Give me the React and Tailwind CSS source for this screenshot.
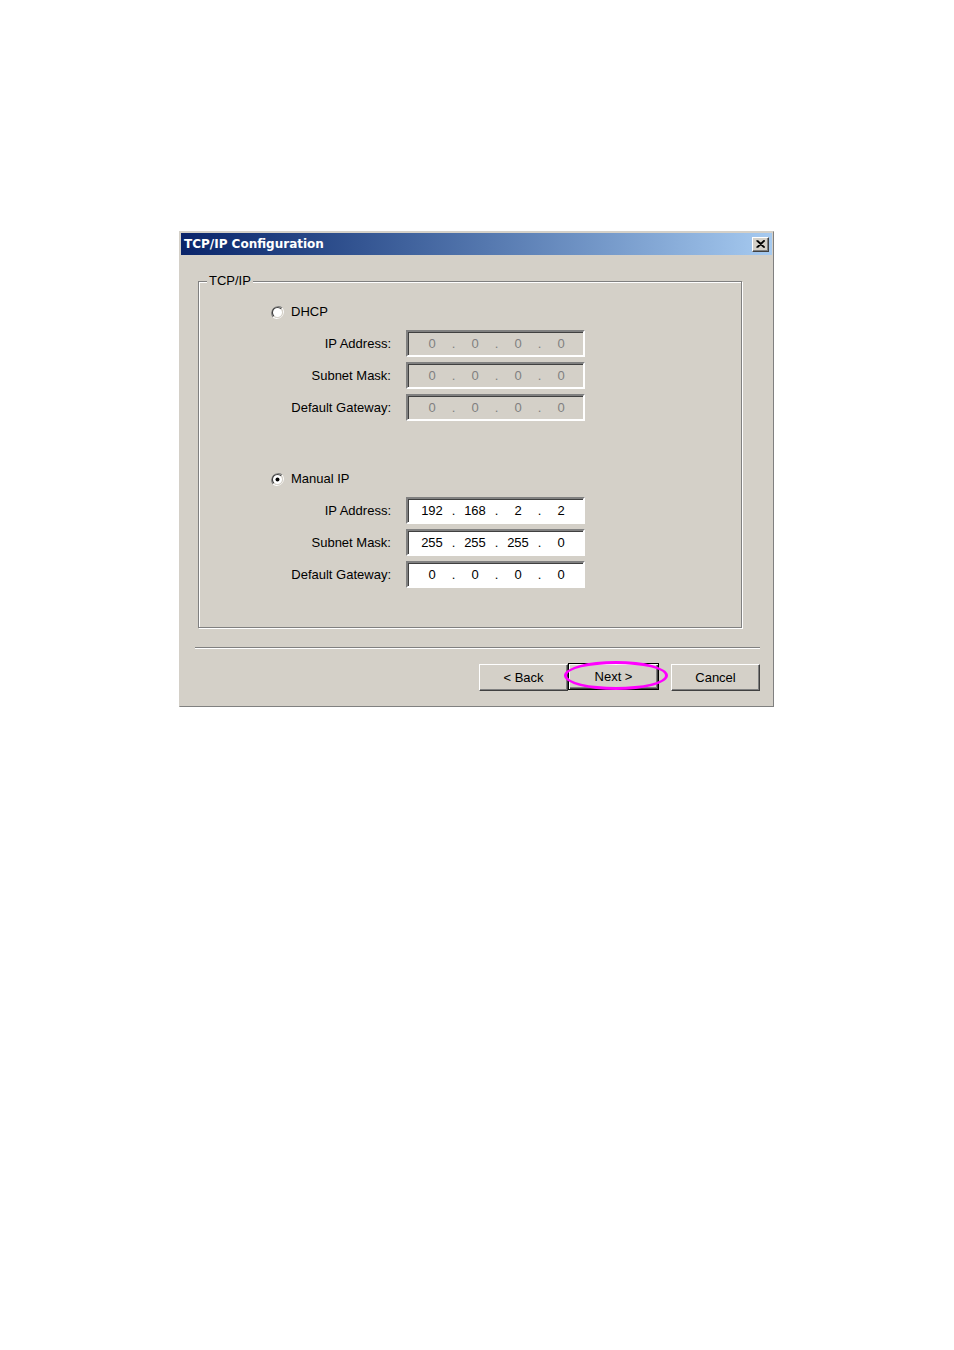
function Radio({ checked }) {
  return (
    <svg width="13" height="13" viewBox="0 0 12 12" className="shrink-0">
      <path d="M10.2 1.8 A6 6 0 0 0 1.8 10.2" fill="none" stroke="#808080" strokeWidth="1" />
      <path d="M1.8 10.2 A6 6 0 0 0 10.2 1.8" fill="none" stroke="#ffffff" strokeWidth="1" />
      <circle cx="6" cy="6" r="4.6" fill="#ffffff" />
      <path d="M9.3 2.7 A4.6 4.6 0 0 0 2.7 9.3" fill="none" stroke="#404040" strokeWidth="1" />
      <path d="M2.7 9.3 A4.6 4.6 0 0 0 9.3 2.7" fill="none" stroke="#d4d0c8" strokeWidth="1" />
      {checked && <circle cx="6" cy="6" r="1.8" fill="#000000" />}
    </svg>
  );
}

function IpField({ parts, enabled }) {
  return (
    <div
      className={
        "flex items-center h-[27px] w-[179px] pl-[6px] border-2 border-t-[#808080] border-l-[#808080] border-b-white border-r-white shadow-[inset_1px_1px_0_#404040] " +
        (enabled ? "bg-white text-black" : "bg-[#d4d0c8] text-[#808080]")
      }
    >
      {parts.map((p, i) => (
        <div key={i} className="flex">
          <span className="w-[36px] text-center">{p}</span>
          {i < 3 && <span className="w-[7px] text-center">.</span>}
        </div>
      ))}
    </div>
  );
}

function Row({ label, parts, enabled, first }) {
  return (
    <div className={"flex items-center " + (first ? "mt-[10px]" : "mt-[5px]")}>
      <div className="w-[192px] text-right">{label}</div>
      <div className="ml-[15px]">
        <IpField parts={parts} enabled={enabled} />
      </div>
    </div>
  );
}

function Btn({ children, isDefault }) {
  return (
    <button
      className={
        "h-[27px] text-[13px] text-black bg-[#d4d0c8] " +
        (isDefault
          ? "w-[91px] border border-black shadow-[inset_1px_1px_0_#fff,inset_-1px_-1px_0_#404040,inset_-2px_-2px_0_#808080]"
          : "w-[89px] border border-t-white border-l-white border-r-[#404040] border-b-[#404040] shadow-[inset_-1px_-1px_0_#808080]")
      }
    >
      {children}
    </button>
  );
}

export default function App() {
  const zero = ["0", "0", "0", "0"];
  return (
    <div className="min-h-[1350px] bg-white pt-[231px] font-['Liberation_Sans',Arial,sans-serif] text-[13px] text-black">
      <div className="ml-[179px] w-[595px] bg-[#d4d0c8] border border-[#d4d0c8] border-r-[#808080] border-b-[#808080] p-px">
        <div className="flex h-[22px] items-center justify-between pl-[3px] pr-[3px] bg-gradient-to-r from-[#0a246a] to-[#a6caf0]">
          <span className="font-bold text-white text-[12px] font-['DejaVu_Sans',sans-serif]">TCP/IP Configuration</span>
          <div className="flex items-center justify-center w-[17px] h-[15px] bg-[#d4d0c8] border border-t-white border-l-white border-r-[#404040] border-b-[#404040] shadow-[inset_-1px_-1px_0_#808080]">
            <svg width="9" height="8" viewBox="0 0 9 8">
              <path d="M0.5 0.5 L8 7.5 M1.5 0.5 L9 7.5 M8 0.5 L0.5 7.5 M9 0.5 L1.5 7.5" stroke="#000" strokeWidth="1.1" />
            </svg>
          </div>
        </div>

        <div className="pl-[17px] pb-[14px]">
          <fieldset className="mt-[18px] w-[544px] border border-[#808080] shadow-[1px_1px_0_#fff,inset_1px_1px_0_#fff] pt-[15px] pb-[39px]">
            <legend className="ml-[8px] px-[2px] bg-[#d4d0c8] leading-[16px]">TCP/IP</legend>

            <div className="flex items-center h-[16px] pl-[72px] gap-[7px]">
              <Radio checked={false} />
              <span>DHCP</span>
            </div>
            <Row label="IP Address:" parts={zero} first />
            <Row label="Subnet Mask:" parts={zero} />
            <Row label="Default Gateway:" parts={zero} />

            <div className="flex items-center h-[16px] mt-[50px] pl-[72px] gap-[7px]">
              <Radio checked />
              <span>Manual IP</span>
            </div>
            <Row label="IP Address:" parts={["192", "168", "2", "2"]} enabled first />
            <Row label="Subnet Mask:" parts={["255", "255", "255", "0"]} enabled />
            <Row label="Default Gateway:" parts={zero} enabled />
          </fieldset>

          <div className="mt-[19px] w-[565px] -ml-[3px] h-[2px] border-t border-t-[#808080] border-b border-b-white" />

          <div className="mt-[15px] flex justify-end pr-[12px]">
            <Btn>&lt; Back</Btn>
            <div className="relative -mt-px">
              <Btn isDefault>Next &gt;</Btn>
              <div className="absolute left-[-4px] top-[-2px] w-[104px] h-[29px] rounded-[50%] border-[3px] border-[#ff00ff] pointer-events-none" />
            </div>
            <div className="ml-[12px]">
              <Btn>Cancel</Btn>
            </div>
          </div>
        </div>
      </div>
    </div>
  );
}
